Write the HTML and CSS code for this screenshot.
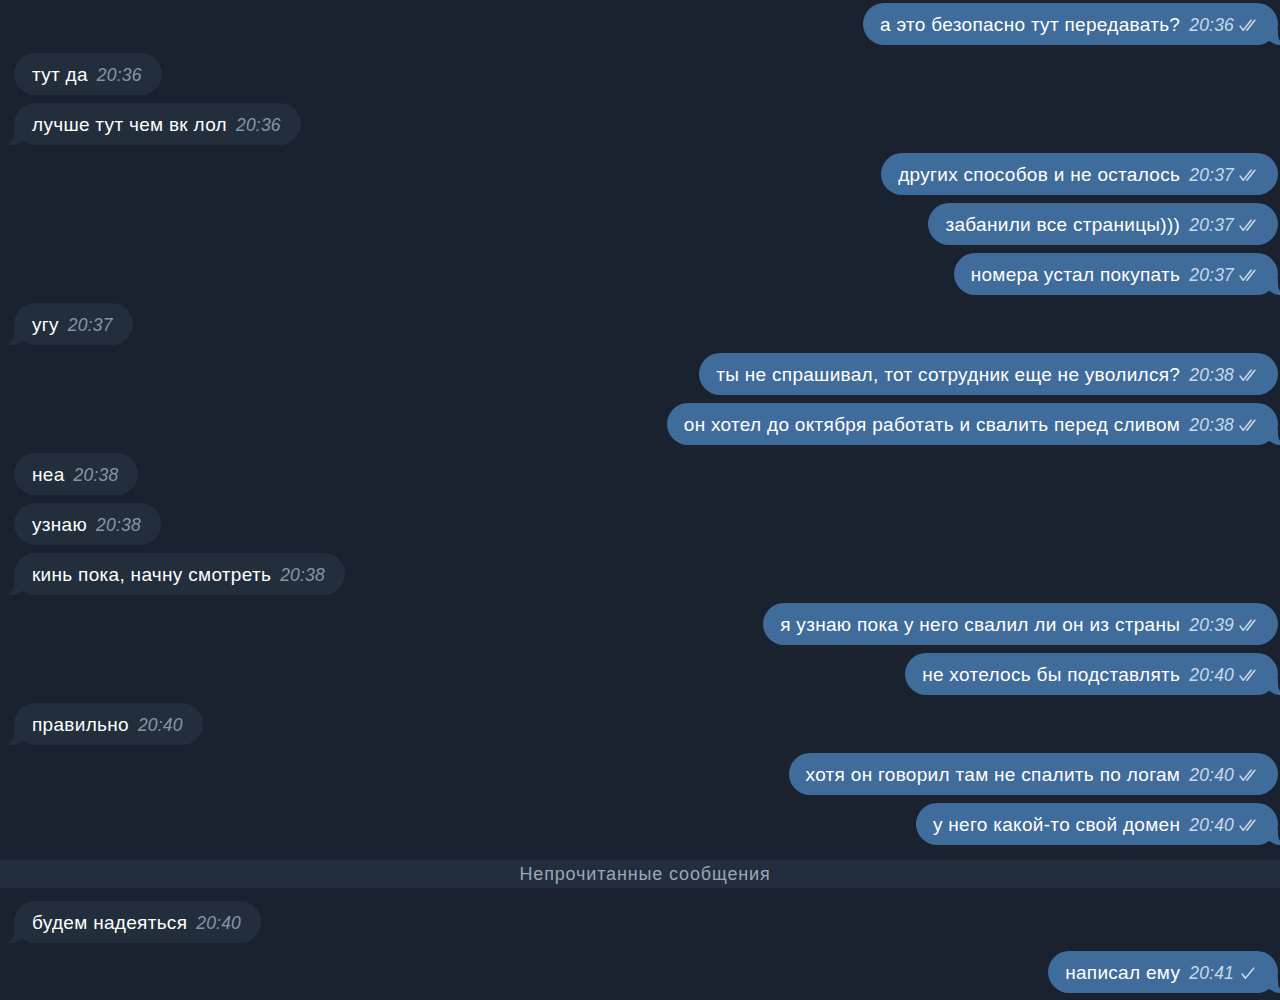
FILE: index.html
```html
<!DOCTYPE html>
<html lang="ru">
<head>
<meta charset="utf-8">
<link rel="stylesheet" href="styles.css">
</head>
<body>
<div class="chat">
  <div class="row out tail"><div class="bubble"><span class="text">а это безопасно тут передавать?</span><span class="meta"><span class="time">20:36</span><svg class="check" viewBox="0 0 18 12"><path d="M1 6.5 L4 10.5 L11.5 1 M7.5 10.5 L15 1"/></svg></span></div></div>
  <div class="row in"><div class="bubble"><span class="text">тут да</span><span class="meta"><span class="time">20:36</span></span></div></div>
  <div class="row in tail"><div class="bubble"><span class="text">лучше тут чем вк лол</span><span class="meta"><span class="time">20:36</span></span></div></div>
  <div class="row out"><div class="bubble"><span class="text">других способов и не осталось</span><span class="meta"><span class="time">20:37</span><svg class="check" viewBox="0 0 18 12"><path d="M1 6.5 L4 10.5 L11.5 1 M7.5 10.5 L15 1"/></svg></span></div></div>
  <div class="row out"><div class="bubble"><span class="text">забанили все страницы)))</span><span class="meta"><span class="time">20:37</span><svg class="check" viewBox="0 0 18 12"><path d="M1 6.5 L4 10.5 L11.5 1 M7.5 10.5 L15 1"/></svg></span></div></div>
  <div class="row out tail"><div class="bubble"><span class="text">номера устал покупать</span><span class="meta"><span class="time">20:37</span><svg class="check" viewBox="0 0 18 12"><path d="M1 6.5 L4 10.5 L11.5 1 M7.5 10.5 L15 1"/></svg></span></div></div>
  <div class="row in tail"><div class="bubble"><span class="text">угу</span><span class="meta"><span class="time">20:37</span></span></div></div>
  <div class="row out"><div class="bubble"><span class="text">ты не спрашивал, тот сотрудник еще не уволился?</span><span class="meta"><span class="time">20:38</span><svg class="check" viewBox="0 0 18 12"><path d="M1 6.5 L4 10.5 L11.5 1 M7.5 10.5 L15 1"/></svg></span></div></div>
  <div class="row out tail"><div class="bubble"><span class="text">он хотел до октября работать и свалить перед сливом</span><span class="meta"><span class="time">20:38</span><svg class="check" viewBox="0 0 18 12"><path d="M1 6.5 L4 10.5 L11.5 1 M7.5 10.5 L15 1"/></svg></span></div></div>
  <div class="row in"><div class="bubble"><span class="text">неа</span><span class="meta"><span class="time">20:38</span></span></div></div>
  <div class="row in"><div class="bubble"><span class="text">узнаю</span><span class="meta"><span class="time">20:38</span></span></div></div>
  <div class="row in tail"><div class="bubble"><span class="text">кинь пока, начну смотреть</span><span class="meta"><span class="time">20:38</span></span></div></div>
  <div class="row out"><div class="bubble"><span class="text">я узнаю пока у него свалил ли он из страны</span><span class="meta"><span class="time">20:39</span><svg class="check" viewBox="0 0 18 12"><path d="M1 6.5 L4 10.5 L11.5 1 M7.5 10.5 L15 1"/></svg></span></div></div>
  <div class="row out tail"><div class="bubble"><span class="text">не хотелось бы подставлять</span><span class="meta"><span class="time">20:40</span><svg class="check" viewBox="0 0 18 12"><path d="M1 6.5 L4 10.5 L11.5 1 M7.5 10.5 L15 1"/></svg></span></div></div>
  <div class="row in tail"><div class="bubble"><span class="text">правильно</span><span class="meta"><span class="time">20:40</span></span></div></div>
  <div class="row out"><div class="bubble"><span class="text">хотя он говорил там не спалить по логам</span><span class="meta"><span class="time">20:40</span><svg class="check" viewBox="0 0 18 12"><path d="M1 6.5 L4 10.5 L11.5 1 M7.5 10.5 L15 1"/></svg></span></div></div>
  <div class="row out tail"><div class="bubble"><span class="text">у него какой-то свой домен</span><span class="meta"><span class="time">20:40</span><svg class="check" viewBox="0 0 18 12"><path d="M1 6.5 L4 10.5 L11.5 1 M7.5 10.5 L15 1"/></svg></span></div></div>
  <div class="unread">Непрочитанные сообщения</div>
  <div class="row in tail"><div class="bubble"><span class="text">будем надеяться</span><span class="meta"><span class="time">20:40</span></span></div></div>
  <div class="row out tail"><div class="bubble"><span class="text">написал ему</span><span class="meta"><span class="time">20:41</span><svg class="check single" viewBox="0 0 18 12"><path d="M3 6.5 L6 10.5 L14 1"/></svg></span></div></div>
</div>
</body>
</html>
```
FILE: styles.css
```css
html, body {
  margin: 0;
  padding: 0;
  background: #19222e;
  height: 100%;
  overflow: hidden;
}

.chat {
  display: flex;
  flex-direction: column;
  gap: 8px;
  padding: 3px 2px 0 14px;
  font-family: "Liberation Sans", Arial, sans-serif;
  color: #ffffff;
}

.row {
  display: flex;
}

.row.out {
  justify-content: flex-end;
}

.row.in {
  justify-content: flex-start;
}

.bubble {
  position: relative;
  height: 42px;
  line-height: 43px;
  border-radius: 21px;
  padding: 0 20px 0 18px;
  font-size: 19px;
  letter-spacing: 0.3px;
  white-space: nowrap;
}

.in .bubble {
  background: #232e3c;
}

.out .bubble {
  background: #3f6c9b;
  padding-left: 17px;
}

.meta {
  margin-left: 9px;
  font-size: 17.5px;
  font-style: italic;
  display: inline-flex;
  align-items: baseline;
  letter-spacing: 0.2px;
}

.in .time {
  color: #8595a9;
}

.out .time {
  color: #c9d8e8;
}

.check {
  width: 19px;
  height: 13px;
  margin-left: 5px;
  fill: none;
  stroke: #c9d8e8;
  stroke-width: 1.5;
  stroke-linecap: round;
  stroke-linejoin: round;
  align-self: center;
}

.tail .bubble::before,
.tail .bubble::after {
  content: "";
  position: absolute;
  bottom: 0;
  height: 16px;
}

.in.tail .bubble::before {
  left: -7px;
  width: 20px;
  background: #232e3c;
  border-bottom-right-radius: 16px 14px;
}

.in.tail .bubble::after {
  left: -26px;
  width: 26px;
  background: #19222e;
  border-bottom-right-radius: 10px;
}

.out.tail .bubble::before {
  right: -7px;
  width: 20px;
  background: #3f6c9b;
  border-bottom-left-radius: 16px 14px;
}

.out.tail .bubble::after {
  right: -26px;
  width: 26px;
  background: #19222e;
  border-bottom-left-radius: 10px;
}

.unread {
  margin: 7px -2px 5px -14px;
  padding-left: 10px;
  height: 28px;
  line-height: 29px;
  background: #222e3d;
  color: #98a8ba;
  font-size: 18px;
  letter-spacing: 0.85px;
  text-align: center;
}
```
